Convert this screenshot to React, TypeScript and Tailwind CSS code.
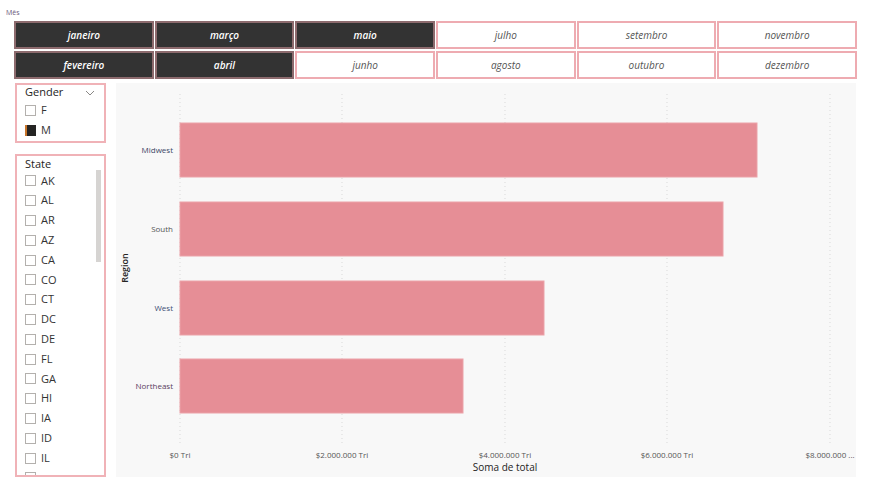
const MONTHS_TOP = [
  { label: 'janeiro', on: true },
  { label: 'março', on: true },
  { label: 'maio', on: true },
  { label: 'julho', on: false },
  { label: 'setembro', on: false },
  { label: 'novembro', on: false },
];
const MONTHS_BOTTOM = [
  { label: 'fevereiro', on: true },
  { label: 'abril', on: true },
  { label: 'junho', on: false },
  { label: 'agosto', on: false },
  { label: 'outubro', on: false },
  { label: 'dezembro', on: false },
];

const STATES = ['AK', 'AL', 'AR', 'AZ', 'CA', 'CO', 'CT', 'DC', 'DE', 'FL', 'GA', 'HI', 'IA', 'ID', 'IL'];

const BARS = [
  { region: 'Midwest', y: 40, w: 577, color: '#3d4766' },
  { region: 'South', y: 119, w: 543, color: '#555555' },
  { region: 'West', y: 198, w: 364, color: '#3f4f75' },
  { region: 'Northeast', y: 276, w: 283, color: '#5a4060' },
];

const TICKS = [
  { x: 64, label: '$0 Tri' },
  { x: 226, label: '$2.000.000 Tri' },
  { x: 389, label: '$4.000.000 Tri' },
  { x: 551, label: '$6.000.000 Tri' },
  { x: 714, label: '$8.000.000 ...' },
];

const font = { fontFamily: '"Open Sans", "Noto Sans", "Liberation Sans", sans-serif' };

function MonthButton({ label, on }: { label: string; on: boolean }) {
  return (
    <div
      className={
        on
          ? 'h-[28px] flex items-center justify-center border-2 border-[#8d6b6e] bg-[#333333] text-white text-[10px] italic font-semibold'
          : 'h-[28px] flex items-center justify-center border-2 border-[#eeabb1] bg-white text-[#555555] text-[10px] italic'
      }
    >
      {label}
    </div>
  );
}

function Box({ checked = false }: { checked?: boolean }) {
  return (
    <span
      className={
        checked
          ? 'w-[11px] h-[11px] shrink-0 bg-[#252423] border-l-2 border-l-[#c8752a]'
          : 'w-[11px] h-[11px] shrink-0 border border-[#b3b0ad] bg-white'
      }
    />
  );
}

export default function App() {
  return (
    <div className="w-[873px] h-[483px] bg-white overflow-hidden" style={font}>
      <div className="pl-[6px] pt-[9px] h-[21px] text-[7px] leading-none text-[#6a5a7a]">Mês</div>

      {/* ── Month tiles ── */}
      <div className="ml-[14px] w-[843px] grid grid-cols-6 gap-x-[1px] gap-y-[2px]">
        {MONTHS_TOP.map((m) => (
          <MonthButton key={m.label} {...m} />
        ))}
        {MONTHS_BOTTOM.map((m) => (
          <MonthButton key={m.label} {...m} />
        ))}
      </div>

      <div className="flex mt-[4px] ml-[15px] gap-[10px]">
        {/* ── Slicers ── */}
        <div className="w-[91px] flex flex-col gap-[11px]">
          <div className="h-[60px] border-2 border-[#f0b2b7] px-[8px]">
            <div className="flex items-center justify-between h-[15px] text-[11px] text-[#252423]">
              Gender
              <svg width="10" height="6" viewBox="0 0 10 6" className="mr-[1px]">
                <path d="M1 1 L5 5 L9 1" fill="none" stroke="#8a8886" strokeWidth="1" />
              </svg>
            </div>
            <div className="flex items-center gap-[5px] h-[20px] text-[11px] text-[#333]">
              <Box /> F
            </div>
            <div className="flex items-center gap-[5px] h-[20px] text-[11px] text-[#333]">
              <Box checked /> M
            </div>
          </div>

          <div className="relative h-[323px] border-2 border-[#f0b2b7] pl-[8px] overflow-hidden">
            <div className="h-[15px] text-[11px] leading-[15px] text-[#252423]">State</div>
            {STATES.map((s) => (
              <div key={s} className="flex items-center gap-[5px] h-[19.8px] text-[11px] text-[#333]">
                <Box /> {s}
              </div>
            ))}
            <div className="flex items-start h-[19.8px] pt-[4px]">
              <Box />
            </div>
            <div className="absolute left-[79px] top-[14px] w-[5px] h-[92px] bg-[#d6d4d2]" />
          </div>
        </div>

        {/* ── Chart ── */}
        <div className="w-[740px] h-[394px] bg-[#f8f8f8]">
          <svg width="740" height="394" viewBox="0 0 740 394" style={font}>
            {TICKS.map((t) => (
              <line
                key={t.x}
                x1={t.x}
                x2={t.x}
                y1={11}
                y2={362}
                stroke="#d9d9d9"
                strokeWidth="1"
                strokeDasharray="1 3"
              />
            ))}
            {BARS.map((b) => (
              <g key={b.region}>
                <rect x={64} y={b.y} width={b.w} height={54} fill="#e68e96" stroke="#eba2a8" strokeWidth="1" />
                <text x={57} y={b.y + 30} textAnchor="end" fontSize="8" fill={b.color}>
                  {b.region}
                </text>
              </g>
            ))}
            {TICKS.map((t) => (
              <text key={t.label} x={t.x} y={375} textAnchor="middle" fontSize="8" fill="#555555">
                {t.label}
              </text>
            ))}
            <text x={389} y={388} textAnchor="middle" fontSize="10" fill="#252423">
              Soma de total
            </text>
            <text
              x={0}
              y={0}
              transform="translate(12 185) rotate(-90)"
              textAnchor="middle"
              fontSize="9"
              fontWeight="600"
              fill="#252423"
            >
              Region
            </text>
          </svg>
        </div>
      </div>
    </div>
  );
}
